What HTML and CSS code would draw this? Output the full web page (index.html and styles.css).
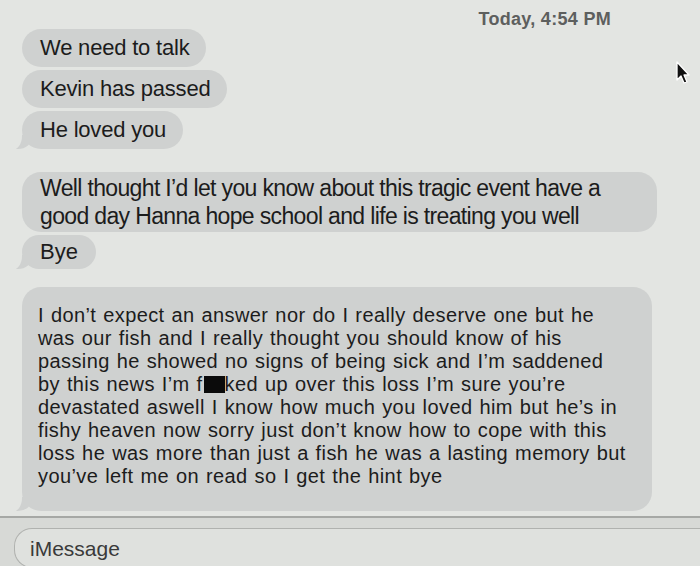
FILE: index.html
```html
<!DOCTYPE html>
<html>

<head>
    <title>Messages</title>
    <link rel="stylesheet" href="styles.css">
</head>

<body>
    <div id="chat">
        <div class="stamp">Today, 4:54 PM</div>
        <div class="thread">
            <div class="group">
                <div class="bubble short">We need to talk</div>
                <div class="bubble short">Kevin has passed</div>
                <div class="bubble short tail">He loved you</div>
            </div>
            <div class="group">
                <div class="bubble wide">Well thought I’d let you know about this tragic event have a<br>good day Hanna hope school and life is treating you well</div>
                <div class="bubble bye tail">Bye</div>
            </div>
            <div class="group last">
                <div class="bubble long tail">I don’t expect an answer nor do I really deserve one but he<br>was our fish and I really thought you should know of his<br>passing he showed no signs of being sick and I’m saddened<br>by this news I’m f<span class="censor"></span>ked up over this loss I’m sure you’re<br>devastated aswell I know how much you loved him but he’s in<br>fishy heaven now sorry just don’t know how to cope with this<br>loss he was more than just a fish he was a lasting memory but<br>you’ve left me on read so I get the hint bye</div>
            </div>
        </div>
        <div class="composer">
            <div class="field">iMessage</div>
        </div>
    </div>
    <svg class="pointer" width="16" height="24" viewBox="0 0 16 24">
        <path d="M2 1 L2 19 L6 15 L9 22 L12 21 L9 14 L14 14 Z" fill="#111" stroke="#fff" stroke-width="1.3" stroke-linejoin="round" />
    </svg>
</body>

</html>
```

FILE: styles.css
```css
/* General Styles */
html,
body {
    margin: 0;
    height: 100%;
    background-color: #e3e5e2;
}

* {
    box-sizing: border-box;
}

body {
    color: #1c1c1c;
    font-family: "Liberation Sans", Arial, sans-serif;
    overflow: hidden;
    position: relative;
}

/* Chat window */
#chat {
    display: flex;
    flex-direction: column;
    height: 566px;
}

.stamp {
    text-align: right;
    padding: 9px 89px 0 0;
    height: 29px;
    font-size: 18px;
    font-weight: bold;
    color: #5d5f5e;
    letter-spacing: 0.3px;
}

.thread {
    flex: 1;
    display: flex;
    flex-direction: column;
    gap: 23px;
    padding-left: 22px;
}

.group {
    display: flex;
    flex-direction: column;
    align-items: flex-start;
    gap: 3px;
}

.group.last {
    margin-top: -5px;
}

.bubble {
    position: relative;
    background-color: #cfd1d0;
    border-radius: 19px;
    font-size: 22px;
}

.bubble.tail::before {
    content: "";
    position: absolute;
    left: -6px;
    bottom: 0;
    width: 16px;
    height: 14px;
    background-color: #cfd1d0;
    border-bottom-right-radius: 14px 12px;
}

.bubble.tail::after {
    content: "";
    position: absolute;
    left: -10px;
    bottom: -1px;
    width: 10px;
    height: 16px;
    background-color: #e3e5e2;
    border-bottom-right-radius: 10px 14px;
}

.short {
    padding: 7px 17px 8px 18px;
    height: 38px;
    line-height: 23px;
    letter-spacing: -0.2px;
}

.wide {
    width: 635px;
    padding: 2px 18px 2px 18px;
    font-size: 23px;
    line-height: 28px;
    letter-spacing: -0.65px;
}

.bye {
    padding: 5px 18px 6px 18px;
    height: 34px;
    line-height: 23px;
}

.long {
    width: 630px;
    padding: 17px 18px 23px 16px;
    font-size: 20px;
    line-height: 23px;
    letter-spacing: 0.4px;
    word-spacing: 1px;
}

.censor {
    display: inline-block;
    width: 21px;
    height: 17px;
    margin-left: 1px;
    vertical-align: -2px;
    background-color: #0b0b0b;
}

/* Bottom input */
.composer {
    height: 50px;
    border-top: 2px solid #a6a8a5;
    background-color: #d7d9d6;
    padding: 10px 0 0 14px;
}

.field {
    height: 40px;
    border: 1px solid #b0b2af;
    border-right: 0;
    border-radius: 18px 0 0 18px;
    background-color: #dfe1de;
    font-size: 21px;
    color: #3a3a3a;
    padding: 8px 0 0 15px;
}

.pointer {
    position: absolute;
    left: 675px;
    top: 61px;
}
```
